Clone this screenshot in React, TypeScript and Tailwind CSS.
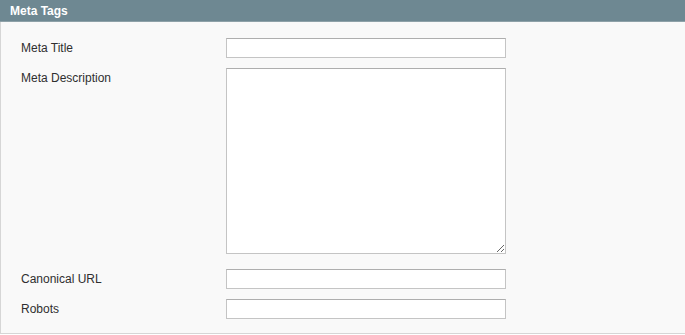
export default function App() {
  const fieldCls =
    "block w-[280px] border border-[#c4c4c4] border-t-[#aeaeae] bg-white outline-none";

  return (
    <div className="w-[685px] bg-white font-['Liberation_Sans',Arial,sans-serif] text-[12px] text-[#2f2f2f]">
      {/* Section header */}
      <div className="h-[22px] bg-[#6e8892] pl-[10px] border-b border-[#8ea1a8] flex items-center">
        <h2 className="text-white font-bold text-[12px] leading-none">Meta Tags</h2>
      </div>

      {/* Fields */}
      <div className="bg-[#f9f9f9] border-l border-b border-[#d6d6d6] pt-[16px] pb-[14px] pl-[20px]">
        <div className="grid grid-cols-[205px_280px] gap-y-[10px] leading-[20px]">
          <label>Meta Title</label>
          <input type="text" className={`${fieldCls} h-[20px]`} />

          <label>Meta Description</label>
          <textarea className={`${fieldCls} h-[186px] resize`} />

          <label className="mt-[5px]">Canonical URL</label>
          <input type="text" className={`${fieldCls} h-[20px] mt-[5px]`} />

          <label>Robots</label>
          <input type="text" className={`${fieldCls} h-[20px]`} />
        </div>
      </div>
    </div>
  );
}
